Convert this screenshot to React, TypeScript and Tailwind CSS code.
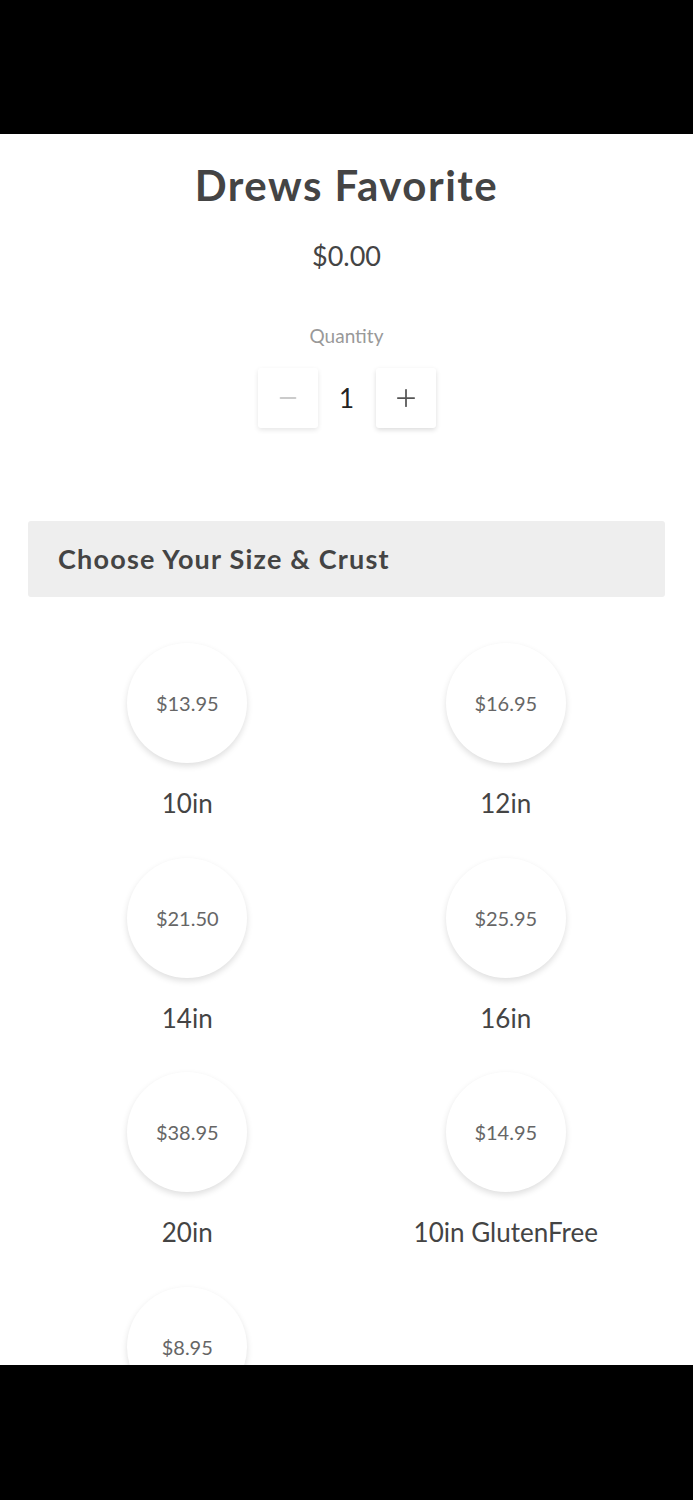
import { Minus, Plus } from "lucide-react"

const sizes = [
  { price: "$13.95", label: "10in" },
  { price: "$16.95", label: "12in" },
  { price: "$21.50", label: "14in" },
  { price: "$25.95", label: "16in" },
  { price: "$38.95", label: "20in" },
  { price: "$14.95", label: "10in GlutenFree" },
  { price: "$8.95", label: "" },
]

function SizeOption({ price, label }: { price: string; label: string }) {
  return (
    <div className="flex h-[214.5px] flex-col items-center">
      <div className="flex h-[120px] w-[120px] items-center justify-center rounded-full bg-white shadow-[0_3px_6px_rgba(0,0,0,0.13)]">
        <span className="text-[20px] text-[#666]">{price}</span>
      </div>
      <span className="mt-[24px] text-[26px] leading-[32px] text-[#444]">{label}</span>
    </div>
  )
}

export default function App() {
  return (
    <div className="flex h-[1500px] flex-col bg-black font-['Lato',sans-serif]">
      <div className="h-[134px] shrink-0" />
      <div className="h-[1231px] shrink-0 overflow-hidden bg-white">
        <div className="flex flex-col items-center pt-[26px]">
          <h1 className="text-[42px] font-bold leading-[50px] tracking-[1.5px] text-[#444]">Drews Favorite</h1>
          <p className="mt-[30px] text-[27px] leading-[32px] text-[#444]">$0.00</p>
          <p className="mt-[52px] text-[19px] leading-[24px] text-[#999]">Quantity</p>
          <div className="mt-[20px] flex items-center">
            <button className="flex h-[60px] w-[60px] items-center justify-center rounded-[3px] bg-white shadow-[0_2px_5px_rgba(0,0,0,0.1)]">
              <Minus className="h-[26px] w-[26px] text-[#bbb]" strokeWidth={1.5} />
            </button>
            <span className="w-[58px] text-center text-[26px] text-[#222]">1</span>
            <button className="flex h-[60px] w-[60px] items-center justify-center rounded-[3px] bg-white shadow-[0_2px_5px_rgba(0,0,0,0.14)]">
              <Plus className="h-[28px] w-[28px] text-[#555]" strokeWidth={1.5} />
            </button>
          </div>
        </div>
        <div className="mx-[28px] mt-[93px] flex h-[76px] items-center rounded-[3px] bg-[#eeeeee] px-[30px]">
          <h2 className="text-[27px] font-bold tracking-[1.2px] text-[#444]">Choose Your Size &amp; Crust</h2>
        </div>
        <div className="mx-[28px] mt-[46px] grid grid-cols-2">
          {sizes.map((s) => (
            <SizeOption key={s.price} price={s.price} label={s.label} />
          ))}
        </div>
      </div>
      <div className="flex-1" />
    </div>
  )
}
